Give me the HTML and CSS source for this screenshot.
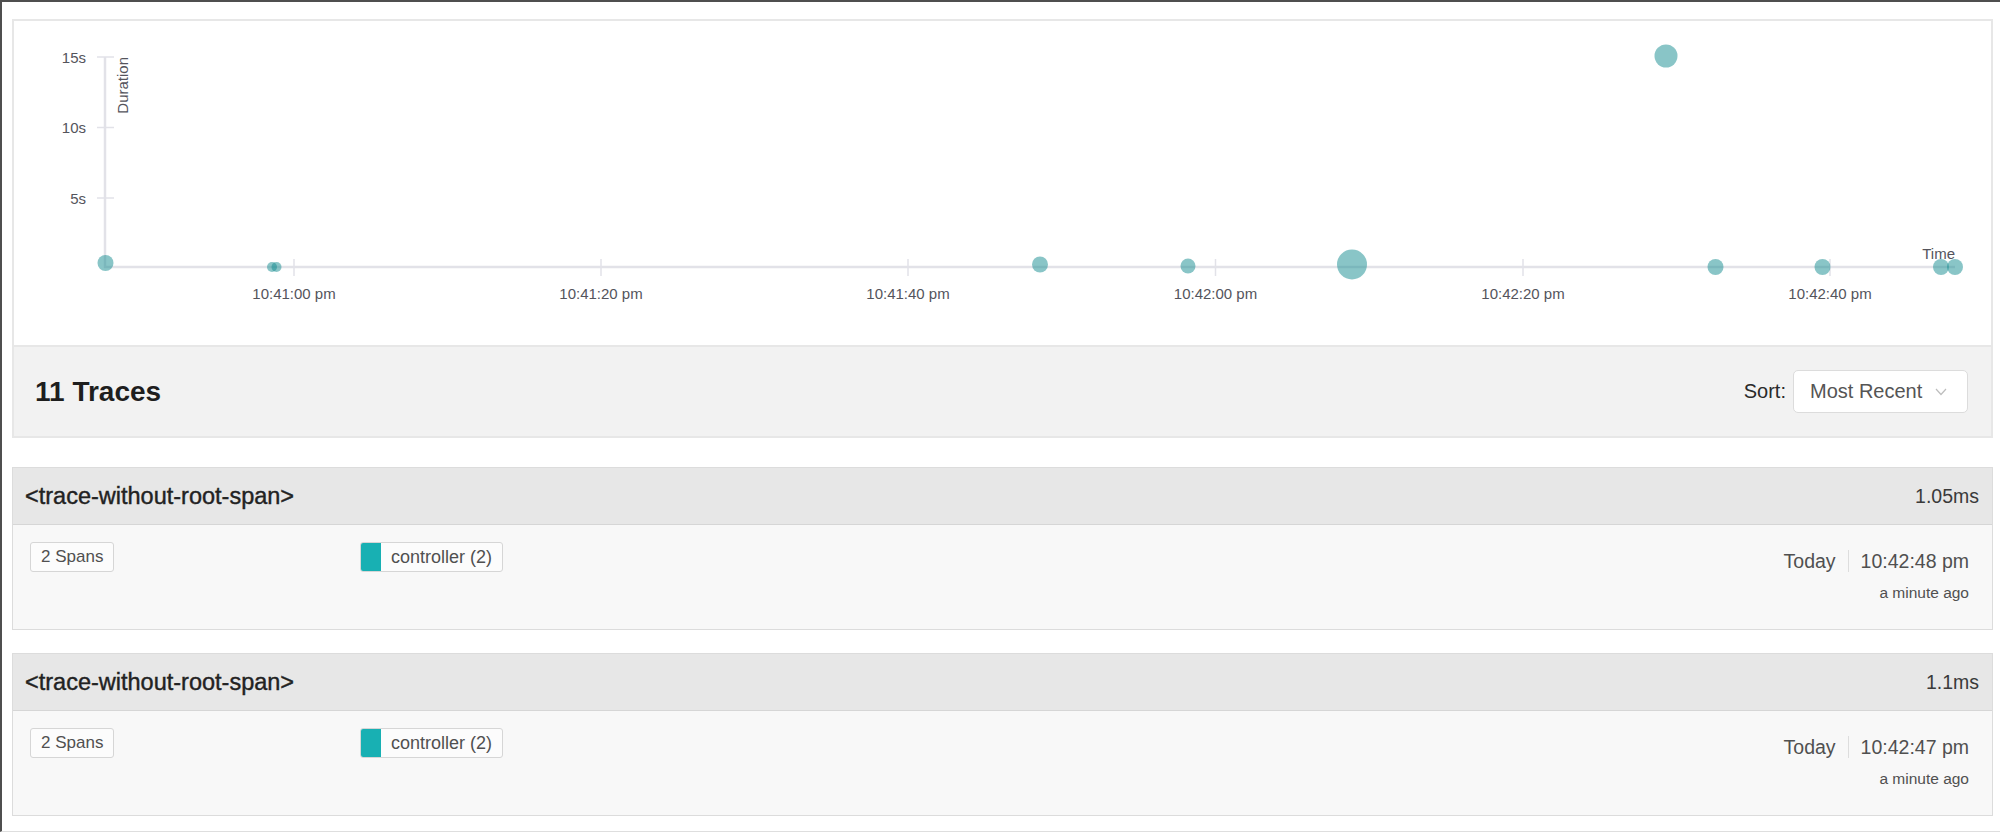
FILE: index.html
```html
<!DOCTYPE html>
<html>
<head>
<meta charset="utf-8">
<title>Traces</title>
<link rel="stylesheet" href="styles.css">
</head>
<body>
<div class="frame">
  <section class="chart">
    <svg class="plot" width="1977" height="324" viewBox="14 21 1977 324" xmlns="http://www.w3.org/2000/svg">
      <g class="axis">
        <line x1="105" y1="57" x2="105" y2="268"/>
        <line x1="104" y1="267" x2="1955" y2="267"/>
      </g>
      <g class="tick">
        <line x1="97" y1="57" x2="114" y2="57"/>
        <line x1="97" y1="127.5" x2="114" y2="127.5"/>
        <line x1="97" y1="198" x2="114" y2="198"/>
        <line x1="294" y1="259" x2="294" y2="276"/>
        <line x1="601" y1="259" x2="601" y2="276"/>
        <line x1="908" y1="259" x2="908" y2="276"/>
        <line x1="1215.5" y1="259" x2="1215.5" y2="276"/>
        <line x1="1523" y1="259" x2="1523" y2="276"/>
        <line x1="1830" y1="259" x2="1830" y2="276"/>
      </g>
      <g class="lbl">
        <text x="86" y="63" text-anchor="end">15s</text>
        <text x="86" y="133" text-anchor="end">10s</text>
        <text x="86" y="204" text-anchor="end">5s</text>
        <text transform="translate(128,57) rotate(-90)" text-anchor="end">Duration</text>
        <text x="294" y="299" text-anchor="middle">10:41:00 pm</text>
        <text x="601" y="299" text-anchor="middle">10:41:20 pm</text>
        <text x="908" y="299" text-anchor="middle">10:41:40 pm</text>
        <text x="1215.5" y="299" text-anchor="middle">10:42:00 pm</text>
        <text x="1523" y="299" text-anchor="middle">10:42:20 pm</text>
        <text x="1830" y="299" text-anchor="middle">10:42:40 pm</text>
        <text x="1955" y="259" text-anchor="end">Time</text>
      </g>
      <g class="dots">
        <circle cx="105.5" cy="263" r="8"/>
        <circle cx="272" cy="267" r="5"/>
        <circle cx="276.5" cy="267" r="5"/>
        <circle cx="1040" cy="264.5" r="8"/>
        <circle cx="1188" cy="266" r="7.5"/>
        <circle cx="1352" cy="264.5" r="15"/>
        <circle cx="1666" cy="56" r="11.5"/>
        <circle cx="1715.5" cy="267" r="8"/>
        <circle cx="1822.5" cy="267" r="8"/>
        <circle cx="1941" cy="267" r="8"/>
        <circle cx="1955" cy="267" r="8"/>
      </g>
    </svg>
  </section>

  <section class="summary">
    <h2 class="count">11 Traces</h2>
    <div class="sort">
      <span class="sort-label">Sort:</span>
      <div class="select">
        <span>Most Recent</span>
        <svg class="chev" width="12" height="8" viewBox="0 0 12 8"><polyline points="1,1 6,6.5 11,1"/></svg>
      </div>
    </div>
  </section>

  <article class="trace">
    <header class="trace-head">
      <span class="trace-title">&lt;trace-without-root-span&gt;</span>
      <span class="trace-dur">1.05ms</span>
    </header>
    <div class="trace-body">
      <div class="col-spans"><span class="badge">2 Spans</span></div>
      <div class="col-services">
        <span class="svc"><span class="swatch"></span><span class="svc-name">controller (2)</span></span>
      </div>
      <div class="col-time">
        <div class="when"><span class="day">Today</span><span class="sep"></span><span class="clock">10:42:48 pm</span></div>
        <div class="ago">a minute ago</div>
      </div>
    </div>
  </article>

  <article class="trace">
    <header class="trace-head">
      <span class="trace-title">&lt;trace-without-root-span&gt;</span>
      <span class="trace-dur">1.1ms</span>
    </header>
    <div class="trace-body">
      <div class="col-spans"><span class="badge">2 Spans</span></div>
      <div class="col-services">
        <span class="svc"><span class="swatch"></span><span class="svc-name">controller (2)</span></span>
      </div>
      <div class="col-time">
        <div class="when"><span class="day">Today</span><span class="sep"></span><span class="clock">10:42:47 pm</span></div>
        <div class="ago">a minute ago</div>
      </div>
    </div>
  </article>
</div>
</body>
</html>
```

FILE: styles.css
```css
* { box-sizing: border-box; }

html, body {
  margin: 0;
  padding: 0;
  background: #ffffff;
}

body {
  font-family: "Liberation Sans", Arial, Helvetica, sans-serif;
  color: #333;
}

.frame {
  height: 832px;
  overflow: hidden;
  border-left: 2px solid #4f4f4f;
  border-top: 2px solid #4f4f4f;
  border-bottom: 1px solid #dedede;
  padding: 17px 7px 0 10px;
}

/* ---------- chart ---------- */
.chart {
  height: 328px;
  border: 2px solid #e7e7e7;
  background: #fff;
}

.plot {
  display: block;
}

.axis line {
  stroke: #e2e2e8;
  stroke-width: 2.5;
}

.tick line {
  stroke: #e2e2e8;
  stroke-width: 1.5;
}

.lbl text {
  font-family: "Liberation Sans", Arial, sans-serif;
  font-size: 15px;
  fill: #54545c;
}

.dots circle {
  fill: rgb(19, 139, 143);
  fill-opacity: 0.5;
}

/* ---------- summary bar ---------- */
.summary {
  height: 91px;
  background: #f2f2f2;
  border: 2px solid #e7e7e7;
  border-top: 0;
  display: flex;
  align-items: center;
  justify-content: space-between;
  padding: 0 23px 0 21px;
}

.count {
  margin: 0;
  font-size: 28px;
  font-weight: bold;
  color: #1e1e1e;
}

.sort {
  display: flex;
  align-items: center;
  gap: 7px;
}

.sort-label {
  font-size: 20px;
  color: #2a2a2a;
}

.select {
  width: 175px;
  height: 43px;
  background: #fff;
  border: 1px solid #dcdcdc;
  border-radius: 5px;
  display: flex;
  align-items: center;
  justify-content: space-between;
  padding: 0 20px 0 16px;
  font-size: 20px;
  color: #555;
}

.chev polyline {
  fill: none;
  stroke: #bdbdbd;
  stroke-width: 1.2;
}

/* ---------- trace cards ---------- */
.trace {
  margin-top: 29px;
  border: 1px solid #dcdcdc;
  background: #f8f8f8;
}

.trace + .trace {
  margin-top: 23px;
}

.trace-head {
  height: 57px;
  background: #e7e7e7;
  border-bottom: 1px solid #d6d6d6;
  display: flex;
  align-items: center;
  justify-content: space-between;
  padding: 0 13px 0 12px;
}

.trace-title {
  font-size: 23.5px;
  font-weight: normal;
  -webkit-text-stroke: 0.4px #222;
  color: #222;
}

.trace-dur {
  font-size: 19.5px;
  color: #3a3a3a;
}

.trace-body {
  height: 104px;
  display: flex;
  align-items: flex-start;
  padding: 17px 23px 0 17px;
}

.col-spans {
  width: 330px;
}

.badge {
  display: inline-flex;
  align-items: center;
  height: 30px;
  padding: 0 10px;
  border: 1px solid #d6d6d6;
  border-radius: 3px;
  background: #fcfcfc;
  font-size: 17px;
  color: #505050;
}

.svc {
  display: inline-flex;
  align-items: stretch;
  height: 30px;
  border: 1px solid #d6d6d6;
  border-radius: 3px;
  background: #fcfcfc;
  overflow: hidden;
}

.swatch {
  width: 21px;
  margin: -1px 0 -1px -1px;
  background: #18b0b3;
  border-radius: 3px 0 0 3px;
}

.svc-name {
  display: flex;
  align-items: center;
  padding: 0 10px;
  font-size: 18px;
  color: #505050;
}

.col-time {
  margin-left: auto;
  padding-top: 7px;
  text-align: right;
}

.when {
  display: flex;
  align-items: center;
  justify-content: flex-end;
  height: 24px;
  font-size: 19.5px;
  color: #505050;
}

.sep {
  width: 1px;
  height: 22px;
  background: #dddddd;
  margin: 0 12px;
}

.ago {
  margin-top: 10px;
  line-height: 20px;
  font-size: 15.5px;
  color: #505050;
}
```
